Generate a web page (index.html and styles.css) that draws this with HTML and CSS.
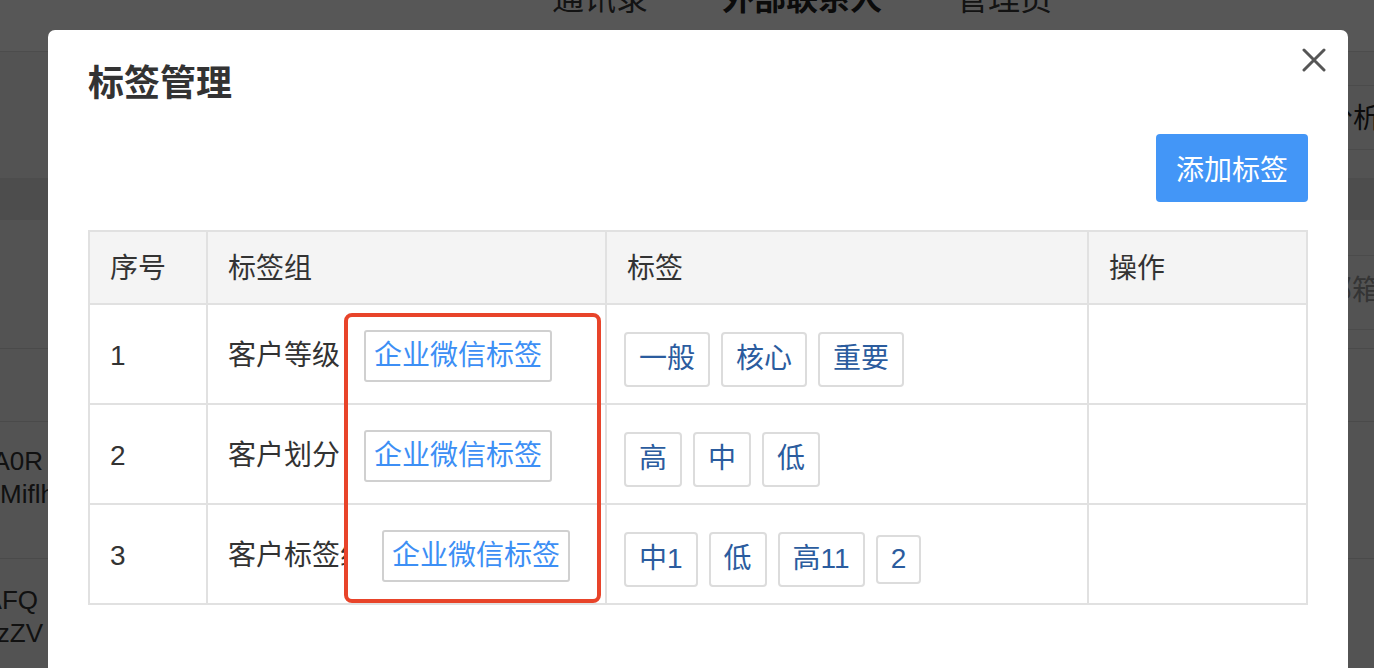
FILE: index.html
```html
<!DOCTYPE html>
<html lang="zh-CN">
<head>
<meta charset="utf-8">
<title>标签管理</title>
<link rel="stylesheet" href="styles.css">
</head>
<body>
<div class="page">
  <header class="topnav">
    <nav class="nav">
      <span class="nav-item">通讯录</span>
      <span class="nav-item nav-active">外部联系人</span>
      <span class="nav-item">管理员</span>
    </nav>
  </header>
  <div class="subbar"><div class="subtab">数据分析</div></div>
  <div class="band"></div>
  <div class="bg-row bg-row-a"><div class="search">企业邮箱</div></div>
  <div class="bg-row bg-row-b"></div>
  <div class="bg-row bg-row-c">
    <div class="ids">
      <div class="id-line id-w43">wmA0R</div>
      <div class="id-line">MiflhXq2k</div>
    </div>
  </div>
  <div class="bg-row bg-row-d">
    <div class="ids">
      <div class="id-line id-w38">wmAFQ</div>
      <div class="id-line id-w43">wmzZV</div>
    </div>
  </div>
</div>

<div class="mask"></div>

<div class="modal">
  <h2 class="modal-title">标签管理</h2>
  <button class="close" aria-label="关闭">
    <svg width="24" height="24" viewBox="0 0 24 24"><path d="M2 2 L22 22 M22 2 L2 22" stroke="#565656" stroke-width="3" stroke-linecap="round" fill="none"/></svg>
  </button>
  <div class="toolbar"><button class="btn-primary">添加标签</button></div>
  <div class="table-wrap">
    <div class="tbl">
      <div class="cell th">序号</div>
      <div class="cell th">标签组</div>
      <div class="cell th">标签</div>
      <div class="cell th">操作</div>

      <div class="cell">1</div>
      <div class="cell"><span class="gname">客户等级</span><span class="wx">企业微信标签</span></div>
      <div class="cell tags"><span class="tag">一般</span><span class="tag">核心</span><span class="tag">重要</span></div>
      <div class="cell"></div>

      <div class="cell">2</div>
      <div class="cell"><span class="gname">客户划分</span><span class="wx">企业微信标签</span></div>
      <div class="cell tags"><span class="tag">高</span><span class="tag">中</span><span class="tag">低</span></div>
      <div class="cell"></div>

      <div class="cell">3</div>
      <div class="cell"><span class="gname gname-clip">客户标签组</span><span class="wx wx-far">企业微信标签</span></div>
      <div class="cell tags"><span class="tag">中1</span><span class="tag">低</span><span class="tag">高11</span><span class="tag tag-sm">2</span></div>
      <div class="cell"></div>
    </div>
    <div class="mark"></div>
  </div>
</div>
</body>
</html>
```

FILE: styles.css
```css
html, body {
  margin: 0;
  padding: 0;
}
body {
  width: 1374px;
  height: 668px;
  overflow: hidden;
  background: #f2f2f2;
  font-family: "Liberation Sans", "Noto Sans CJK SC", sans-serif;
  color: #333;
}

/* ---------- background page ---------- */
.page {
  width: 1374px;
}
.topnav {
  height: 52px;
  background: #ffffff;
  border-bottom: 1px solid #dedede;
  box-sizing: border-box;
  overflow: hidden;
}
.nav {
  display: flex;
  gap: 74px;
  padding-left: 552px;
  margin-top: -17px;
  font-size: 32px;
  line-height: 32px;
  color: #3a3a3a;
}
.nav-active {
  font-weight: bold;
  color: #222;
}
.subbar {
  height: 126px;
  display: flex;
  justify-content: flex-end;
  padding-top: 33px;
  box-sizing: border-box;
}
.subtab {
  height: 65px;
  width: 250px;
  margin-right: -7px;
  padding-bottom: 4px;
  box-sizing: border-box;
  border-top: 1px solid #dcdcdc;
  border-bottom: 1px solid #dcdcdc;
  display: flex;
  align-items: center;
  justify-content: flex-end;
  font-size: 28px;
  color: #222;
}
.band {
  height: 42px;
  background: #e0e0e0;
}
.bg-row {
  box-sizing: border-box;
  border-bottom: 1px solid #dadada;
}
.bg-row-a {
  height: 129px;
  display: flex;
  justify-content: flex-end;
  align-items: flex-start;
  padding-top: 35px;
}
.search {
  height: 75px;
  width: 250px;
  margin-right: -6px;
  padding-bottom: 10px;
  box-sizing: border-box;
  border-top: 1px solid #dcdcdc;
  border-bottom: 1px solid #dcdcdc;
  display: flex;
  align-items: center;
  justify-content: flex-end;
  font-size: 28px;
  color: #9a9a9a;
}
.bg-row-b {
  height: 73px;
}
.bg-row-c {
  height: 137px;
  padding-top: 23px;
}
.bg-row-d {
  height: 140px;
  padding-top: 25px;
}
.ids {
  font-size: 26px;
  line-height: 33px;
  color: #333;
  white-space: nowrap;
}
.id-line {
  display: flex;
}
.id-w43 {
  width: 43px;
  justify-content: flex-end;
}
.id-w38 {
  width: 38px;
  justify-content: flex-end;
}

/* ---------- overlay ---------- */
.mask {
  position: fixed;
  inset: 0;
  background: rgba(0, 0, 0, 0.66);
}
.modal {
  position: fixed;
  left: 48px;
  top: 30px;
  width: 1300px;
  height: 700px;
  box-sizing: border-box;
  padding: 36px 40px 0 40px;
  background: #ffffff;
  border-radius: 7px;
}
.modal-title {
  margin: 0;
  font-size: 36px;
  line-height: 36px;
  font-weight: bold;
  color: #333;
}
.close {
  position: absolute;
  top: 18px;
  right: 22px;
  width: 24px;
  height: 24px;
  padding: 0;
  border: 0;
  background: transparent;
  display: block;
}
.close svg {
  display: block;
}
.toolbar {
  display: flex;
  justify-content: flex-end;
  margin-top: 32px;
}
.btn-primary {
  width: 152px;
  height: 68px;
  border: 0;
  border-radius: 4px;
  background: #4396f7;
  color: #ffffff;
  font-family: inherit;
  font-size: 28px;
  padding: 0;
}
.table-wrap {
  position: relative;
  margin-top: 28px;
  width: 1220px;
}
.tbl {
  display: grid;
  grid-template-columns: 118px 399px 482px 219px;
  grid-template-rows: 73px 100px 100px 100px;
  border-top: 2px solid #e1e1e1;
  border-left: 2px solid #e1e1e1;
}
.cell {
  display: flex;
  align-items: center;
  box-sizing: border-box;
  padding-left: 20px;
  padding-top: 3px;
  border-right: 2px solid #e1e1e1;
  border-bottom: 2px solid #e1e1e1;
  font-size: 28px;
  line-height: 34px;
  color: #333;
  white-space: nowrap;
  overflow: hidden;
}
.th {
  background: #f4f4f4;
}
.gname {
  flex: none;
}
.gname-clip {
  width: 118px;
  overflow: hidden;
}
.wx {
  flex: none;
  margin-left: 24px;
  height: 52px;
  box-sizing: border-box;
  padding: 0 8px;
  border: 2px solid #d0d0d0;
  border-radius: 3px;
  display: inline-flex;
  align-items: center;
  color: #3d8ff5;
  background: #fff;
}
.wx-far {
  margin-left: 36px;
}
.tags {
  padding-left: 17px;
  padding-top: 10px;
}
.tag {
  height: 55px;
  box-sizing: border-box;
  padding: 0 13px;
  margin-right: 11px;
  border: 2px solid #dcdcdc;
  border-radius: 4px;
  display: inline-flex;
  align-items: center;
  color: #2b5c9e;
}
.tag-sm {
  height: 49px;
}
.mark {
  position: absolute;
  left: 256px;
  top: 83px;
  width: 257px;
  height: 290px;
  box-sizing: border-box;
  border: 4px solid #e8442a;
  border-radius: 8px;
}
```
